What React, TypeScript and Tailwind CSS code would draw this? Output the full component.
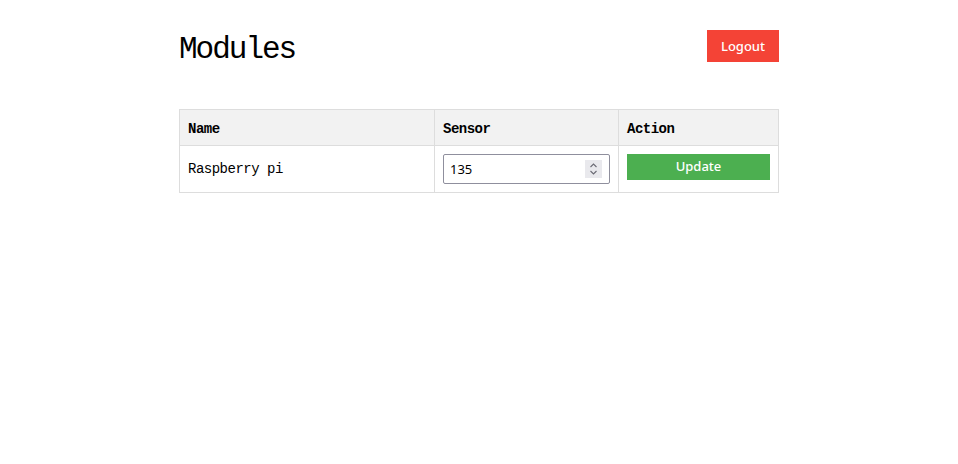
import React from "react";

const mono = { fontFamily: '"Liberation Mono", "DejaVu Sans Mono", monospace' };
const sans = { fontFamily: '"Noto Sans", "Noto Sans CJK SC", sans-serif' };

export default function App() {
  return (
    <div className="min-h-[464px] bg-white">
      <div className="mx-auto w-[600px] pt-[30px]">
        <div className="flex h-[32px] items-center justify-between">
          <h1
            className="pt-[6px] text-[31px] leading-none tracking-[-2px] text-black"
            style={mono}
          >
            Modules
          </h1>
          <button
            className="h-[32px] w-[72px] bg-[#f44336] pt-[2px] text-[13px] font-medium text-white"
            style={sans}
          >
            Logout
          </button>
        </div>
        <table
          className="mt-[47px] w-[600px] border-collapse text-[14px] text-black"
          style={mono}
        >
          <thead>
            <tr className="h-[36px] bg-[#f2f2f2]">
              <th className="w-[255px] border border-[#dddddd] px-[8px] pt-[3px] text-left font-bold tracking-[-0.5px]">
                Name
              </th>
              <th className="w-[184px] border border-[#dddddd] px-[8px] pt-[3px] text-left font-bold tracking-[-0.5px]">
                Sensor
              </th>
              <th className="border border-[#dddddd] px-[8px] pt-[3px] text-left font-bold tracking-[-0.5px]">
                Action
              </th>
            </tr>
          </thead>
          <tbody>
            <tr className="h-[47px]">
              <td className="border border-[#dddddd] px-[8px] tracking-[-0.5px]">
                Raspberry pi
              </td>
              <td className="border border-[#dddddd] px-[8px]">
                <div className="relative h-[30px] w-[167px]">
                  <input
                    type="text"
                    defaultValue="135"
                    className="h-[30px] w-[167px] rounded-[2px] border border-[#8f8f9d] px-[6px] text-[13px] text-black outline-none"
                    style={{ fontFamily: '"Noto Sans", "Liberation Sans", sans-serif' }}
                  />
                  <div className="absolute right-[8px] top-[6px] flex h-[18px] w-[17px] items-center justify-center bg-[#e9e9ed]">
                    <svg width="11" height="14" viewBox="0 0 11 14" fill="none" stroke="#6b6b75" strokeWidth="1.1">
                      <path d="M2.5 5 L5.5 2 L8.5 5" />
                      <path d="M2.5 9 L5.5 12 L8.5 9" />
                    </svg>
                  </div>
                </div>
              </td>
              <td className="border border-[#dddddd] px-[8px] pt-[8px] align-top">
                <button
                  className="block h-[26px] w-[143px] bg-[#4caf50] text-[13px] font-medium text-white"
                  style={sans}
                >
                  Update
                </button>
              </td>
            </tr>
          </tbody>
        </table>
      </div>
    </div>
  );
}
